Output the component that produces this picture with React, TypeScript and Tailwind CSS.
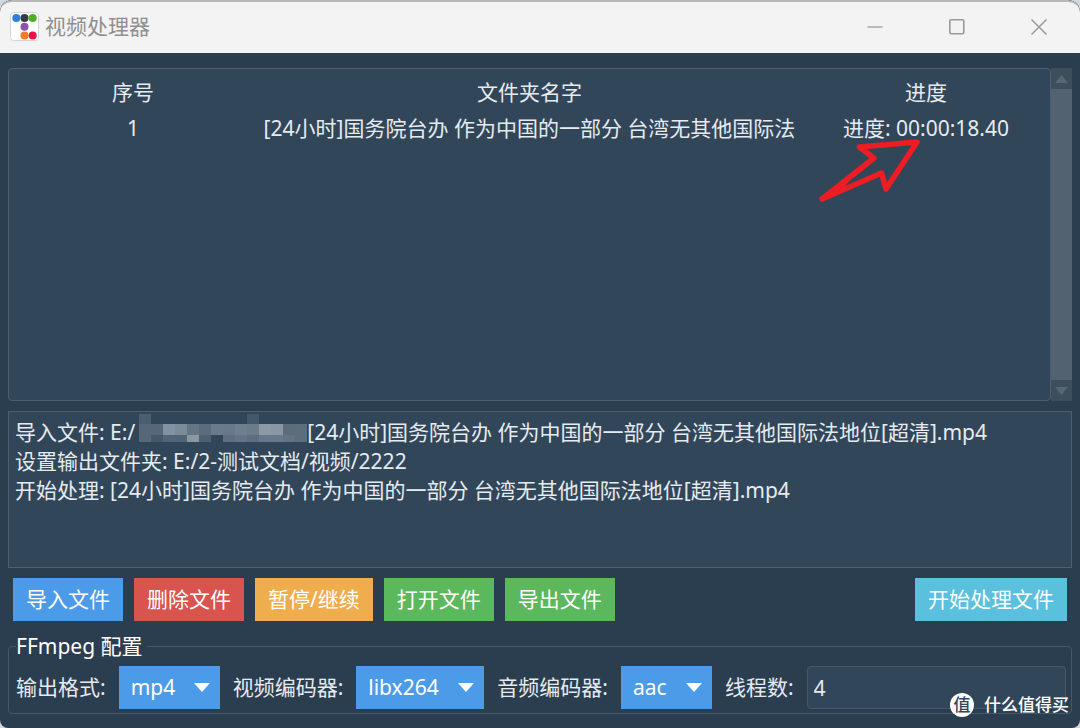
import { useState } from 'react'
import type { ReactNode } from 'react'
import clsx from 'clsx'

interface Task {
  id: number
  name: string
  progress: string
}

const tasks: Task[] = [
  {
    id: 1,
    name: '[24小时]国务院台办 作为中国的一部分 台湾无其他国际法',
    progress: '进度: 00:00:18.40',
  },
]

const fileActions = [
  { label: '导入文件', className: 'bg-[#4c9be8] hover:bg-[#3f8edb]' },
  { label: '删除文件', className: 'bg-[#d9534f] hover:bg-[#c94743]' },
  { label: '暂停/继续', className: 'bg-[#f0ad4e] hover:bg-[#e39f3e]' },
  { label: '打开文件', className: 'bg-[#5cb85c] hover:bg-[#4ea84e]' },
  { label: '导出文件', className: 'bg-[#5cb85c] hover:bg-[#4ea84e]' },
]

// rows of the pixelated part of the path, one colour per cell
const mosaicRows = [
  {
    y: 0,
    height: 10,
    cells: ['#4a5f72', '', '', '', '', '', '', '', '', '#44586b', '', '', '', ''],
  },
  {
    y: 10,
    height: 11,
    cells: [
      '#566878', '#55677a', '#8292a0', '#7b8b99', '#647586', '#5a6c7e', '#6a7a8a',
      '#687989', '#6f7f8e', '#6a7b8a', '#8d99a4', '#8a97a3', '#5b6c7c', '#5c6d7c',
    ],
  },
  {
    y: 21,
    height: 7,
    cells: [
      '#55687a', '#44586b', '#526576', '#526576', '#8b98a3', '#4d6072', '',
      '#5d6f80', '#627485', '#5b6d7e', '#66788a', '#66788a', '#627385', '#5c6d7d',
    ],
  },
]

const AppIcon = () => (
  <svg width="29" height="29" viewBox="0 0 29 29" aria-hidden="true">
    <rect x="0.5" y="0.5" width="28" height="28" rx="3" fill="#fff" stroke="#d4d4d4" />
    <circle cx="6.3" cy="6" r="4" fill="#2f7fd6" />
    <circle cx="14.5" cy="6" r="4" fill="#333b3d" />
    <circle cx="22.7" cy="6" r="4" fill="#4caf22" />
    <circle cx="14.5" cy="14.8" r="4" fill="#8e52ae" />
    <circle cx="14.5" cy="23.6" r="4" fill="#f47a28" />
    <circle cx="22.7" cy="23.6" r="4" fill="#ee1040" />
  </svg>
)

const TitleBar = () => (
  <header className="flex h-[53px] shrink-0 items-center justify-between rounded-t-xl border-t-2 border-[#b8b8b8] bg-[#f3f3f3] pb-[2px] pl-[10px] text-[#8f8f8f]">
    <div className="flex items-center gap-[6px]">
      <AppIcon />
      <h1>视频处理器</h1>
    </div>
    <div className="flex">
      <button type="button" aria-label="最小化" className="flex h-12 w-[82px] items-center justify-center">
        <svg width="18" height="18" viewBox="0 0 18 18" stroke="#a8a8a8" strokeWidth="1.5">
          <path d="M1.5 9h15" />
        </svg>
      </button>
      <button type="button" aria-label="最大化" className="flex h-12 w-[82px] items-center justify-center">
        <svg width="18" height="18" viewBox="0 0 18 18" fill="none" stroke="#999" strokeWidth="1.6">
          <rect x="1.8" y="1.8" width="14" height="14" rx="1.5" />
        </svg>
      </button>
      <button type="button" aria-label="关闭" className="flex h-12 w-[82px] items-center justify-center">
        <svg width="18" height="18" viewBox="0 0 18 18" stroke="#999" strokeWidth="1.5">
          <path d="M1.5 1.5l15 15M16.5 1.5l-15 15" />
        </svg>
      </button>
    </div>
  </header>
)

const ScrollBar = () => (
  <div className="flex w-[21px] shrink-0 flex-col bg-[#526270]">
    <button type="button" aria-label="向上滚动" className="flex h-[21px] items-center justify-center bg-[#3d4e5c]">
      <svg width="13" height="8" viewBox="0 0 13 8" fill="#566774">
        <path d="M0 8L6.5 0L13 8z" />
      </svg>
    </button>
    <div className="flex-1" />
    <button type="button" aria-label="向下滚动" className="flex h-[21px] items-center justify-center bg-[#3d4e5c]">
      <svg width="13" height="8" viewBox="0 0 13 8" fill="#566774">
        <path d="M0 0L6.5 8L13 0z" />
      </svg>
    </button>
  </div>
)

const TaskTable = () => (
  <section className="relative flex min-h-[200px] flex-1">
    <div className="min-w-0 flex-1 rounded-sm border border-[#4b5f70] bg-[#32465a] pt-[5px]">
      <table className="w-full table-fixed text-center">
        <thead>
          <tr className="h-9">
            <th className="w-[248px] font-normal">序号</th>
            <th className="font-normal">文件夹名字</th>
            <th className="w-[248px] font-normal">进度</th>
          </tr>
        </thead>
        <tbody>
          {tasks.map((task) => (
            <tr key={task.id} className="h-9">
              <td>{task.id}</td>
              <td className="whitespace-nowrap">{task.name}</td>
              <td className="whitespace-nowrap">{task.progress}</td>
            </tr>
          ))}
        </tbody>
      </table>
    </div>
    <ScrollBar />
    {/* hand-drawn arrow that points at the progress value */}
    <svg
      className="pointer-events-none absolute top-[68px] right-[149px]"
      width="104"
      height="68"
      viewBox="0 0 104 68"
      fill="none"
      stroke="#ee1c23"
      strokeWidth="5.5"
      strokeLinejoin="round"
    >
      <path d="M3 63L55 22L40.5 11L98 6L67 53L62.5 37L3 63z" />
      <path d="M3 63L20 55L30 44z" fill="#ee1c23" strokeWidth="2" />
    </svg>
  </section>
)

const Mosaic = () => (
  <svg
    className="-mt-1 ml-1 inline-block align-top"
    width="168"
    height="28"
    viewBox="0 0 168 28"
    shapeRendering="crispEdges"
    aria-hidden="true"
  >
    {mosaicRows.map((row) =>
      row.cells.map((color, index) =>
        color ? (
          <rect
            key={`${row.y}-${index}`}
            x={index * 12}
            y={row.y}
            width="12"
            height={row.height}
            fill={color}
          />
        ) : null
      )
    )}
  </svg>
)

const LogPanel = () => (
  <div
    role="log"
    className="h-[157px] shrink-0 overflow-hidden border border-[#4b5f70] bg-[#32465a] px-[6px] py-[6px] leading-[29px] whitespace-nowrap"
  >
    <p>
      导入文件: E:/
      <Mosaic />
      [24小时]国务院台办 作为中国的一部分 台湾无其他国际法地位[超清].mp4
    </p>
    <p>设置输出文件夹: E:/2-测试文档/视频/2222</p>
    <p>开始处理: [24小时]国务院台办 作为中国的一部分 台湾无其他国际法地位[超清].mp4</p>
  </div>
)

const ActionButton = ({ className, children }: { className: string; children: ReactNode }) => (
  <button type="button" className={clsx('h-[43px] px-[13px] text-white', className)}>
    {children}
  </button>
)

interface SelectFieldProps {
  id: string
  label: string
  options: string[]
  className: string
}

const SelectField = ({ id, label, options, className }: SelectFieldProps) => {
  const [value, setValue] = useState(options[0])

  return (
    <div className="flex items-center gap-[13px]">
      <label htmlFor={id} className="whitespace-nowrap">
        {label}
      </label>
      <div className="relative">
        <select
          id={id}
          value={value}
          onChange={(event) => setValue(event.target.value)}
          className={clsx('block h-[43px] appearance-none bg-[#4c9be8] pl-3 text-white', className)}
        >
          {options.map((option) => (
            <option key={option}>{option}</option>
          ))}
        </select>
        <svg
          className="pointer-events-none absolute top-[17px] right-[10px]"
          width="16"
          height="9"
          viewBox="0 0 16 9"
          fill="#fff"
        >
          <path d="M0 0h16L8 9z" />
        </svg>
      </div>
    </div>
  )
}

const FfmpegSettings = () => (
  <fieldset className="mt-[11px] min-w-0 rounded-sm border border-[#45586a] pt-[5px] pr-[5px] pb-1 pl-[7px]">
    <legend className="pr-1 leading-[29px] text-white">FFmpeg 配置</legend>
    <div className="flex items-center gap-[13px]">
      <SelectField id="format" label="输出格式:" options={['mp4', 'mkv', 'avi']} className="w-[101px]" />
      <SelectField id="vcodec" label="视频编码器:" options={['libx264', 'libx265']} className="w-[128px]" />
      <SelectField id="acodec" label="音频编码器:" options={['aac', 'mp3']} className="w-[91px]" />
      <label htmlFor="threads" className="whitespace-nowrap">
        线程数:
      </label>
      <input
        id="threads"
        type="text"
        defaultValue="4"
        className="h-[43px] w-0 min-w-0 flex-1 rounded-sm border border-[#45586a] bg-[#32465a] px-[6px]"
      />
    </div>
  </fieldset>
)

const Watermark = () => (
  <div className="pointer-events-none absolute right-[11px] bottom-[11px] flex items-center gap-[10px] text-[17px] leading-6 font-medium text-white">
    <span className="flex size-6 items-center justify-center rounded-full bg-white text-[#32465a]">值</span>
    <span>什么值得买</span>
  </div>
)

const App = () => {
  return (
    <div className="min-h-screen bg-[#d5d8da]">
      <div className="relative flex min-h-screen flex-col overflow-hidden rounded-t-xl rounded-b-lg bg-[#2b3e50] font-['Noto_Sans','Noto_Sans_CJK_SC',sans-serif] text-[21px] leading-[29px] text-[#e6ebef]">
        <TitleBar />
        <main className="flex flex-1 flex-col px-2 pt-[15px] pb-[14px]">
          <TaskTable />
          <div className="mt-[10px] flex flex-col gap-[10px]">
            <LogPanel />
            <div className="flex items-center justify-between px-[5px]">
              <div className="flex gap-[11px]">
                {fileActions.map((action) => (
                  <ActionButton key={action.label} className={action.className}>
                    {action.label}
                  </ActionButton>
                ))}
              </div>
              <ActionButton className="bg-[#5bc0de] hover:bg-[#4bb2d1]">开始处理文件</ActionButton>
            </div>
          </div>
          <FfmpegSettings />
        </main>
        <Watermark />
      </div>
    </div>
  )
}

export default App
